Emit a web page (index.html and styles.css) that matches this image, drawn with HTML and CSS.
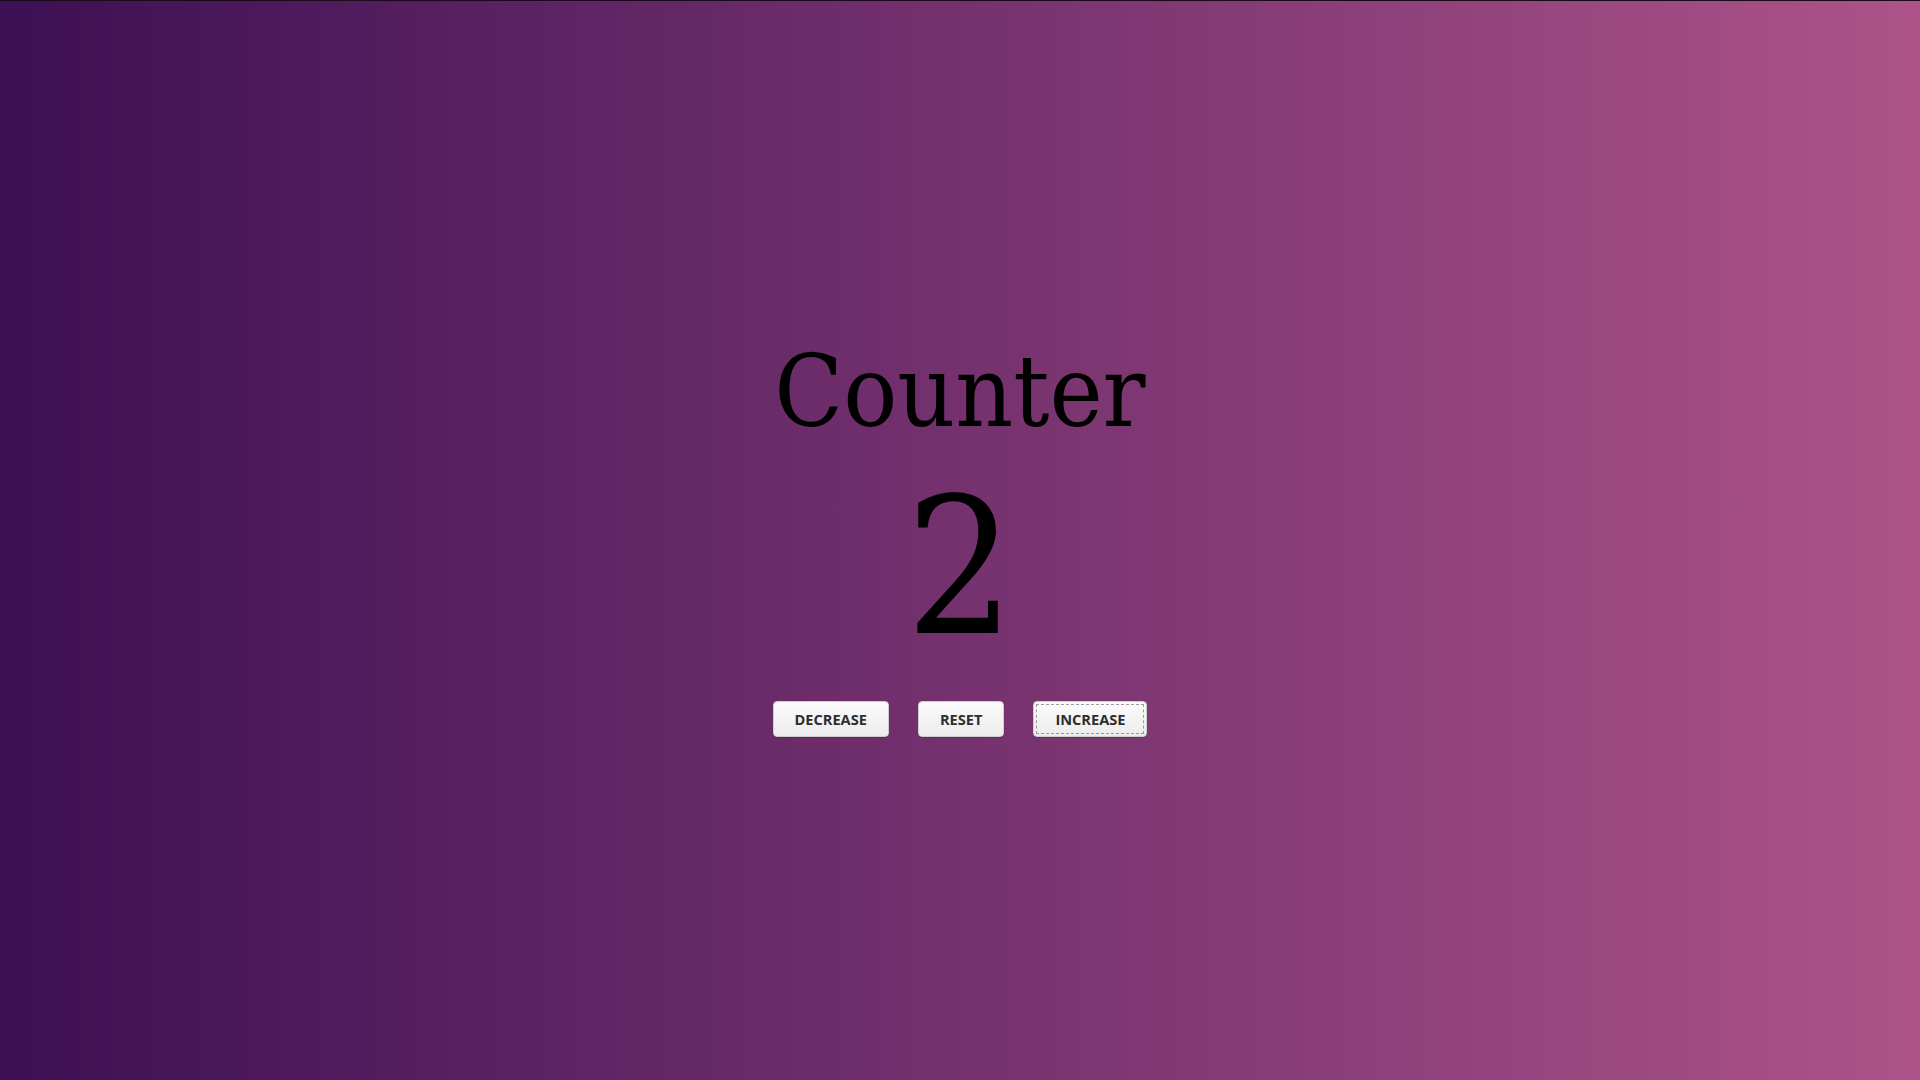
FILE: index.html
```html
<!DOCTYPE html>
<html lang="en">
<head>
<meta charset="utf-8">
<title>Counter</title>
<link rel="stylesheet" href="styles.css">
</head>
<body>
<main class="counter">
  <h1 class="title">Counter</h1>
  <div class="value">2</div>
  <div class="controls">
    <button class="btn">DECREASE</button>
    <button class="btn">RESET</button>
    <button class="btn is-focused">INCREASE</button>
  </div>
</main>
</body>
</html>
```

FILE: styles.css
```css
html, body {
  margin: 0;
  height: 100%;
}
body {
  background: linear-gradient(to right, #3c1053, #ad5389);
  border-top: 1px solid #1a0a1c;
  box-sizing: border-box;
  font-family: "DejaVu Serif Condensed", "DejaVu Serif", serif;
  font-stretch: condensed;
  color: #000;
}
.counter {
  height: 100%;
  box-sizing: border-box;
  padding-bottom: 13px;
  display: flex;
  flex-direction: column;
  align-items: center;
  justify-content: center;
}
.title {
  margin: 0;
  font-size: 100px;
  font-weight: normal;
  line-height: 1.2;
}
.value {
  font-size: 190px;
  line-height: 1;
  margin-top: 21px;
}
.controls {
  display: flex;
  gap: 29px;
  margin-top: 38px;
}
.btn {
  font-family: "Open Sans", sans-serif;
  font-weight: 700;
  font-size: 14.6px;
  color: #2e2e2e;
  height: 36px;
  padding: 0 21px;
  border: 1px solid #cfcfcf;
  border-radius: 4px;
  background: linear-gradient(#fbfbfb, #ececec);
  box-shadow: 0 1px 1px rgba(0,0,0,0.15);
}
.is-focused {
  outline: 1px dashed #9a9a9a;
  outline-offset: -4px;
}
```
